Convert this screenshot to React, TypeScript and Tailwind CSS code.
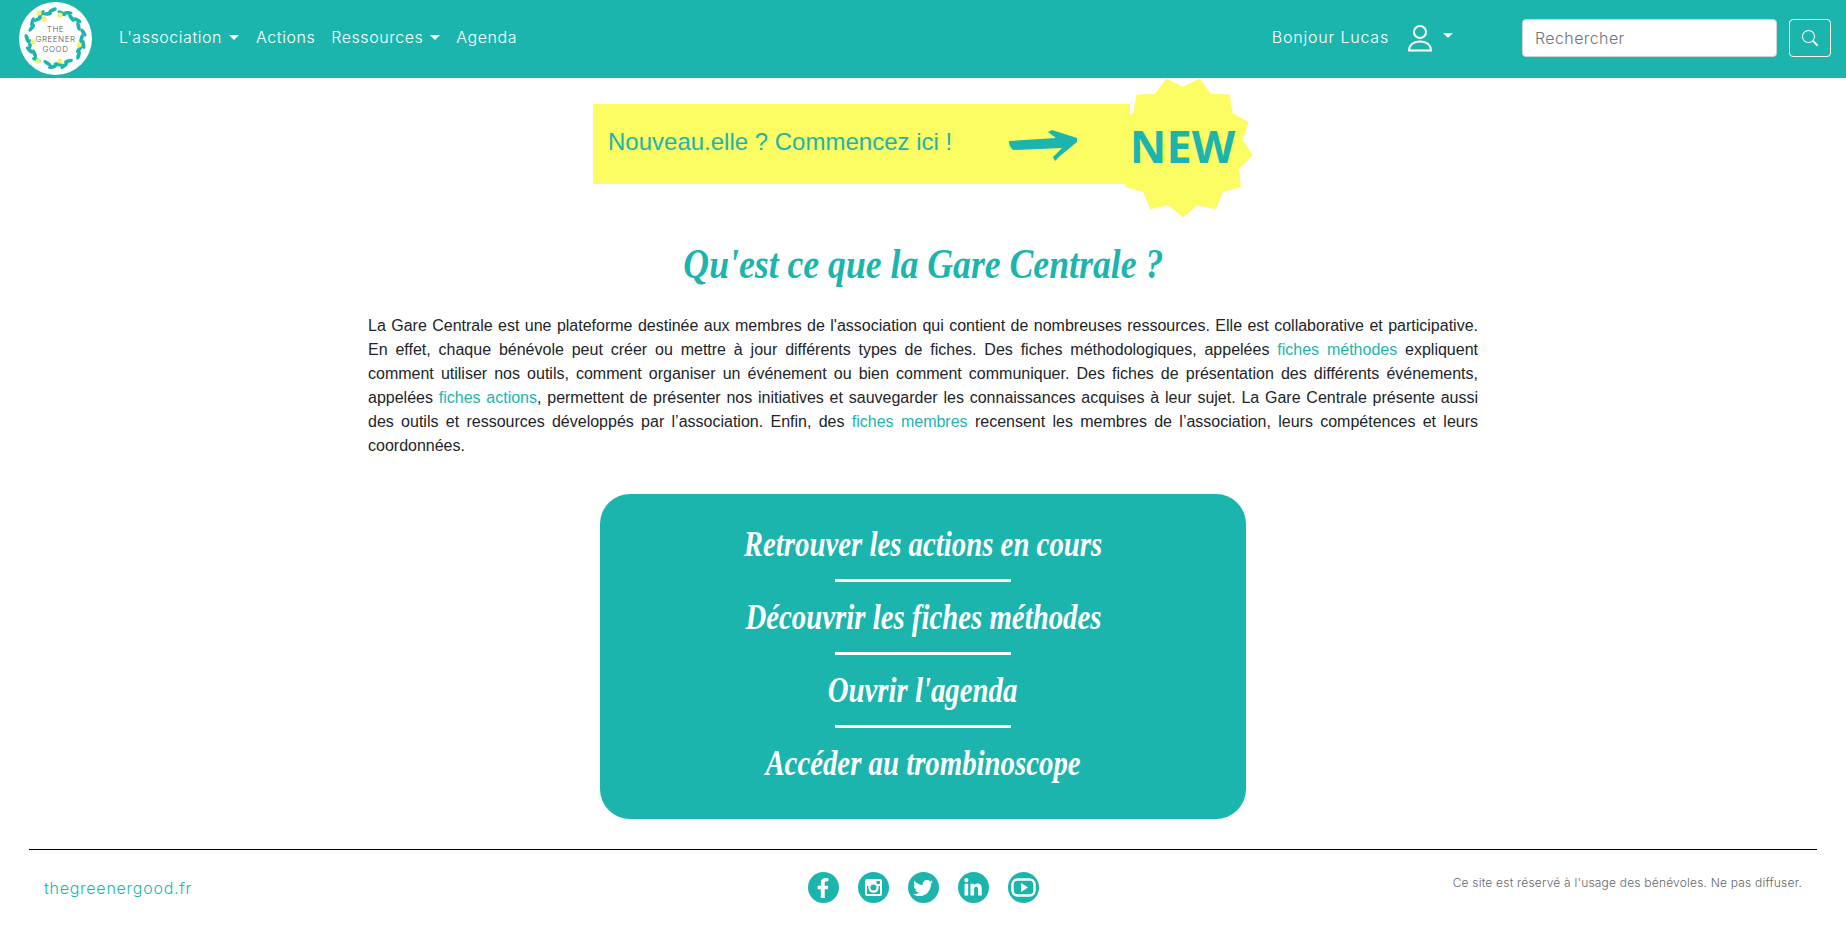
import React from "react";
import { FaFacebookF, FaTwitter, FaLinkedinIn } from "react-icons/fa";
import { BsSearch } from "react-icons/bs";

const starPoints = Array.from({ length: 26 }, (_, i) => {
  const a = (i * Math.PI) / 13 + Math.PI / 2;
  const r = i % 2 === 0 ? 69 : 59;
  return `${(70 + r * Math.cos(a)).toFixed(1)},${(70 + r * Math.sin(a)).toFixed(1)}`;
}).join(" ");

function Caret() {
  return <span className="ml-[7px] inline-block h-0 w-0 border-x-[5px] border-t-[5px] border-x-transparent border-t-white align-[3px]" />;
}

function Logo() {
  const leaves = [14, 26, 38, 50, 62, 78, 90, 102, 114, 126, 150, 162, 174, 186, 198, 222, 234, 246, 258, 270, 294, 306, 318, 330, 342, 354];
  return (
    <div className="relative h-[73px] w-[73px] shrink-0 rounded-full bg-white">
      <svg viewBox="0 0 73 73" className="absolute inset-0 h-full w-full">
        {leaves.map((a, i) => (
          <ellipse
            key={a}
            cx="36.5"
            cy={i % 2 ? 8 : 10.5}
            rx="1.9"
            ry="4.6"
            fill="#1bb5ae"
            transform={`rotate(${a} 36.5 36.5) rotate(${i % 2 ? 70 : 105} 36.5 ${i % 2 ? 8 : 10.5})`}
          />
        ))}
        {[[20, 11], [25, 17], [41, 13], [14, 40], [41, 59], [19, 59], [60, 43]].map(([x, y]) => (
          <circle key={`${x}-${y}`} cx={x} cy={y} r="2.6" fill="#f6f06a" />
        ))}
      </svg>
      <div className="absolute inset-0 flex flex-col items-center justify-center pt-[2px] font-['Inter',sans-serif] text-[8px] font-light leading-[10px] tracking-[0.5px] text-[#555]">
        <span>THE</span>
        <span>GREENER</span>
        <span>GOOD</span>
      </div>
    </div>
  );
}

function Social({ children }: { children: React.ReactNode }) {
  return <span className="flex h-[31px] w-[31px] items-center justify-center rounded-full bg-[#1bb5ae] text-[20px] text-white">{children}</span>;
}

function InstagramGlyph() {
  return (
    <svg viewBox="0 0 31 31" className="h-[31px] w-[31px]">
      <rect x="7" y="7" width="17" height="17" rx="2" fill="white" />
      <rect x="9" y="14" width="13" height="8" fill="#1bb5ae" />
      <circle cx="15.5" cy="15.5" r="5.2" fill="white" />
      <circle cx="15.5" cy="15.5" r="3" fill="#1bb5ae" />
      <rect x="18.5" y="9" width="3.5" height="3" fill="#1bb5ae" />
    </svg>
  );
}

function YoutubeGlyph() {
  return (
    <svg viewBox="0 0 31 31" className="h-[31px] w-[31px]">
      <rect x="4.5" y="7.5" width="22" height="16" rx="5" fill="none" stroke="white" strokeWidth="2.5" />
      <polygon points="13,11 13,20 20,15.5" fill="white" />
    </svg>
  );
}

const lobster = "font-['Liberation_Serif',serif] font-bold italic";

function Divider() {
  return <div className="my-[14px] h-[3px] w-[176px] bg-white" />;
}

function CardLink({ children }: { children: React.ReactNode }) {
  return <span className="h-[42px] scale-x-[0.8] whitespace-nowrap">{children}</span>;
}

export default function App() {
  return (
    <div className="min-h-[943px] bg-white font-['Liberation_Sans',sans-serif] text-[16px] text-[#212529]">
      <nav className="flex h-[78px] items-center bg-[#1bb5ae] pb-[2px] pl-[19px] pr-[15px] font-['Inter',sans-serif] text-[16px] font-light tracking-[0.55px] text-white">
        <Logo />
        <div className="mb-[2px] ml-[27px] flex items-center">
          <span>L'association<Caret /></span>
          <span className="ml-[17px]">Actions</span>
          <span className="ml-[16px]">Ressources<Caret /></span>
          <span className="ml-[16px]">Agenda</span>
        </div>
        <div className="ml-auto flex items-center">
          <span className="mb-[2px] tracking-[0.8px]">Bonjour Lucas</span>
          <svg viewBox="0 0 26 28" className="ml-[18px] h-[28px] w-[26px]" fill="none" stroke="white" strokeWidth="2">
            <circle cx="13" cy="8" r="6" />
            <path d="M2 26.5c0-6 5-9 11-9s11 3 11 9z" />
          </svg>
          <span className="mb-[6px] ml-[3px]"><Caret /></span>
          <input
            placeholder="Rechercher"
            className="ml-[69px] h-[38px] w-[255px] rounded-[4px] border border-[#ced4da] bg-white px-3 text-[16px] font-light tracking-[0.4px] text-[#495057] placeholder:text-[#6c757d]"
          />
          <button className="ml-[12px] flex h-[38px] w-[42px] items-center justify-center rounded-[4px] border border-white text-white">
            <BsSearch className="text-[16px]" />
          </button>
        </div>
      </nav>

      <main className="flex flex-col items-center">
        <div className="mt-[26px] flex w-[660px]">
          <div className="relative flex h-[80px] w-[537px] items-start bg-[#fcfc63] pl-[15px] pt-[24px] text-[24px] leading-[28px] text-[#1bb5ae]">
            <span>Nouveau.elle ? Commencez ici !</span>
            <svg viewBox="0 0 70 32" className="absolute left-[415px] top-[26px] h-[32px] w-[70px]" fill="#1bb5ae">
              <path d="M1 11 L48 8 L40 2 L44 0 L69 8 L69 12 L52 26 L47 31 L45 27 L54 18 L5 20 Q1 17 1 11 Z" />
            </svg>
            <div className="absolute left-[520px] top-[-27px] h-[140px] w-[140px]">
              <svg viewBox="0 0 140 140" className="absolute inset-0 h-full w-full">
                <polygon points={starPoints} fill="#fcfc63" stroke="#fcfc63" strokeWidth="2" strokeLinejoin="round" />
              </svg>
              <span className="absolute inset-0 flex items-center justify-center pb-[2px] pr-[1px] font-['Open_Sans',sans-serif] text-[45px] font-bold text-[#1bb5ae]">NEW</span>
            </div>
          </div>
        </div>

        <h1 className={`mt-[55px] scale-x-[0.85] whitespace-nowrap text-[42px] leading-[50px] text-[#1bb5ae] ${lobster}`}>Qu'est ce que la Gare Centrale ?</h1>

        <p className="mt-[25px] w-[1110px] text-justify leading-[24px]">
          La Gare Centrale est une plateforme destinée aux membres de l'association qui contient de nombreuses ressources. Elle est collaborative et participative. En effet, chaque bénévole peut créer ou mettre à jour différents types de fiches. Des fiches méthodologiques, appelées{" "}
          <a className="text-[#1bb5ae]">fiches méthodes</a> expliquent comment utiliser nos outils, comment organiser un événement ou bien comment communiquer. Des fiches de présentation des différents événements, appelées{" "}
          <a className="text-[#1bb5ae]">fiches actions</a>, permettent de présenter nos initiatives et sauvegarder les connaissances acquises à leur sujet. La Gare Centrale présente aussi des outils et ressources développés par l’association. Enfin, des{" "}
          <a className="text-[#1bb5ae]">fiches membres</a> recensent les membres de l’association, leurs compétences et leurs coordonnées.
        </p>

        <section className={`mt-[36px] flex h-[325px] w-[646px] flex-col items-center justify-center rounded-[30px] bg-[#1bb5ae] pb-[7px] text-[36px] leading-[42px] text-white ${lobster}`}>
          <CardLink>Retrouver les actions en cours</CardLink>
          <Divider />
          <CardLink>Découvrir les fiches méthodes</CardLink>
          <Divider />
          <CardLink>Ouvrir l'agenda</CardLink>
          <Divider />
          <CardLink>Accéder au trombinoscope</CardLink>
        </section>
      </main>

      <footer className="mx-[29px] mt-[30px] flex h-[78px] items-center border-t border-black px-[15px] pb-[2px] font-['Inter',sans-serif] font-light">
        <span className="w-[400px] text-[16px] tracking-[0.75px] text-[#1bb5ae]">thegreenergood.fr</span>
        <div className="flex flex-1 justify-center gap-[19px]">
          <Social><FaFacebookF /></Social>
          <Social><InstagramGlyph /></Social>
          <Social><FaTwitter /></Social>
          <Social><FaLinkedinIn /></Social>
          <Social><YoutubeGlyph /></Social>
        </div>
        <span className="mb-[10px] w-[400px] text-right text-[12px] tracking-[0.2px] text-[#666]">Ce site est réservé à l'usage des bénévoles. Ne pas diffuser.</span>
      </footer>
    </div>
  );
}
